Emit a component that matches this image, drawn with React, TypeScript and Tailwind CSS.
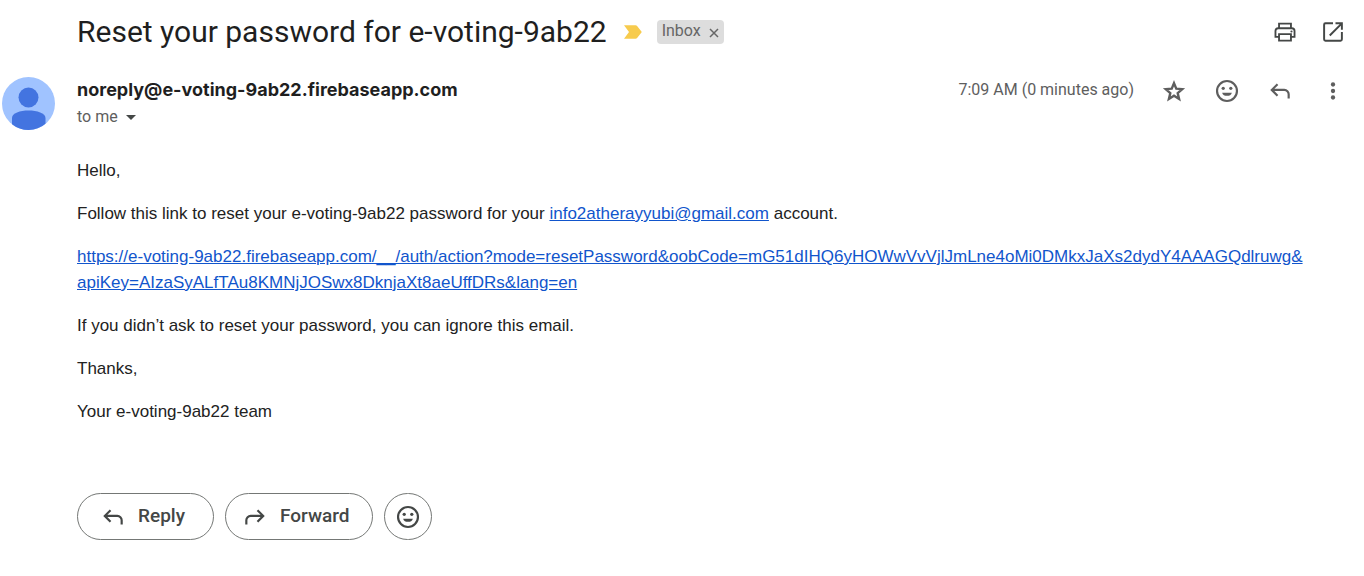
import type { ReactNode } from "react";

const REPLY =
  "M760-200v-160q0-50-35-85t-85-35H273l144 144-57 56-240-240 240-240 57 56-144 144h367q83 0 141.5 58.5T840-360v160h-80Z";
const FORWARD =
  "M200-200v-160q0-50 35-85t85-35h367l-144 144 57 56 240-240-240-240-57 56 144 144H320q-83 0-141.5 58.5T120-360v160h80Z";

function Symbol({ d }: { d: string }) {
  return (
    <svg viewBox="0 -960 960 960" className="size-[26px]" fill="currentColor" aria-hidden="true">
      <path d={d} />
    </svg>
  );
}

function Glyph({ children }: { children: ReactNode }) {
  return (
    <svg viewBox="0 0 24 24" className="size-[26px]" fill="currentColor" aria-hidden="true">
      {children}
    </svg>
  );
}

function Smile() {
  return (
    <Glyph>
      <circle cx="12" cy="12" r="9.2" fill="none" stroke="currentColor" strokeWidth="2" />
      <circle cx="8.5" cy="9.5" r="1.5" />
      <circle cx="15.5" cy="9.5" r="1.5" />
      <path d="M7.500 13.500h9a4.700 4.200 0 0 1-9 0z" />
    </Glyph>
  );
}

function IconButton({ label, children }: { label: string; children: ReactNode }) {
  return (
    <button type="button" aria-label={label} className="flex size-[26px] items-center justify-center">
      {children}
    </button>
  );
}

export default function App() {
  return (
    <main className="min-h-screen bg-white font-['Roboto',sans-serif] text-[#1f1f1f]">
      <header className="flex items-center pt-3 pr-[18px] pl-[77px]">
        <h1 className="text-[30px] leading-10">Reset your password for e-voting-9ab22</h1>
        <svg viewBox="0 0 18 14" className="ml-[17px] h-[14px] w-[18px]" fill="#f7cb4d" aria-hidden="true">
          <path d="M0 .3h11.500q1 0 1.600.8L17.800 7l-4.700 5.900q-.6.8-1.600.8H0L5 7z" />
        </svg>
        <div className="ml-[15px] flex h-6 items-center rounded bg-[#ddd] px-[5px] text-[#666]">
          <span className="pb-0.5 text-base">Inbox</span>
          <button type="button" aria-label="Remove label Inbox" className="ml-2 pt-0.5">
            <svg viewBox="0 0 10 10" className="size-[10px]" stroke="currentColor" strokeWidth="1.500" aria-hidden="true">
              <path d="M1 1l8 8M9 1L1 9" />
            </svg>
          </button>
        </div>
        <div className="ml-auto flex gap-[22px] text-[#444746]">
          <IconButton label="Print all">
            <Glyph>
              <g fill="none" stroke="currentColor" strokeWidth="1.700">
                <path d="M6.500 8.500V4.200h11v4.300" />
                <path d="M6.500 16.500H3.200v-5.500q0-2.500 2.500-2.500h12.600q2.500 0 2.500 2.500v5.500h-3.300" />
                <path d="M6.500 14h11v6h-11z" />
              </g>
              <circle cx="18" cy="11.500" r="1" />
            </Glyph>
          </IconButton>
          <IconButton label="Open in new window">
            <Glyph>
              <g fill="none" stroke="currentColor" strokeWidth="1.800">
                <path d="M12 4H5q-1.200 0-1.200 1.200v13.600Q3.800 20 5 20h14q1.200 0 1.200-1.200V12" />
                <path d="M14.300 4h5.900v6M20.200 4L9 15.200" />
              </g>
            </Glyph>
          </IconButton>
        </div>
      </header>

      <section className="mt-[25px] flex items-start pr-[18px] pl-0.5">
        <svg viewBox="0 0 53 53" className="size-[53px] shrink-0" role="img" aria-label="Sender">
          <circle cx="26.500" cy="26.500" r="26.500" fill="#a0c3ff" />
          <circle cx="26.500" cy="20.500" r="10" fill="#4374e0" />
          <path d="M10 47.200V41c0-5 8-7.500 16.500-7.500S43.500 36 43.500 41v5.800A26.500 26.500 0 0 1 10 47.200z" fill="#4374e0" />
        </svg>
        <div className="ml-[22px]">
          <h2 className="font-['Inter',sans-serif] text-lg leading-[26px] font-bold">
            noreply@e-voting-9ab22.firebaseapp.com
          </h2>
          <button type="button" className="flex items-center text-base leading-7 text-[#5e5e5e]">
            to me
            <svg viewBox="0 0 10 5" className="ml-2 h-[5px] w-[10px]" fill="#444746" aria-hidden="true">
              <path d="M0 0h10L5 5z" />
            </svg>
          </button>
        </div>
        <div className="ml-auto flex items-start text-[#5e5e5e]">
          <time className="mr-[27px] text-base leading-[26px]">7:09 AM (0 minutes ago)</time>
          <div className="flex gap-[27px] pt-px">
            <IconButton label="Star">
              <Glyph>
                <path
                  d="M12 4.800l2.100 5 5.500.5-4.200 3.600 1.300 5.400-4.700-2.900-4.700 2.900 1.300-5.400-4.200-3.600 5.500-.5z"
                  fill="none"
                  stroke="currentColor"
                  strokeWidth="2.200"
                />
              </Glyph>
            </IconButton>
            <IconButton label="Add reaction">
              <Smile />
            </IconButton>
            <IconButton label="Reply">
              <Symbol d={REPLY} />
            </IconButton>
            <IconButton label="More">
              <Glyph>
                <circle cx="12" cy="6" r="2" />
                <circle cx="12" cy="12" r="2" />
                <circle cx="12" cy="18" r="2" />
              </Glyph>
            </IconButton>
          </div>
        </div>
      </section>

      <article className="mt-[27px] flex flex-col gap-[17px] pr-10 pl-[77px] font-['Liberation_Sans',Arial,sans-serif] text-[17px] leading-[26px] text-[#222]">
        <p>Hello,</p>
        <p>
          Follow this link to reset your e-voting-9ab22 password for your{" "}
          <a href="mailto:info2atherayyubi@gmail.com" className="text-[#1155cc] underline">
            info2atherayyubi@gmail.com
          </a>{" "}
          account.
        </p>
        <p>
          <a href="#reset" className="text-[#1155cc] underline">
            https://e-voting-9ab22.firebaseapp.com/__/auth/action?mode=resetPassword&amp;oobCode=mG51dIHQ6yHOWwVvVjlJmLne4oMi0DMkxJaXs2dydY4AAAGQdlruwg&amp;
            <wbr />
            apiKey=AIzaSyALfTAu8KMNjJOSwx8DknjaXt8aeUffDRs&amp;lang=en
          </a>
        </p>
        <p>If you didn’t ask to reset your password, you can ignore this email.</p>
        <p>Thanks,</p>
        <p>Your e-voting-9ab22 team</p>
      </article>

      <footer className="mt-[68px] flex gap-[11px] pl-[77px] text-[19px] font-medium text-[#444746]">
        <button type="button" className="flex h-[47px] items-center gap-3 rounded-full border border-[#747775] pr-7 pl-[22px]">
          <Symbol d={REPLY} />
          Reply
        </button>
        <button type="button" className="flex h-[47px] items-center gap-3 rounded-full border border-[#747775] pr-[23px] pl-4">
          <Symbol d={FORWARD} />
          Forward
        </button>
        <button type="button" aria-label="Add reaction" className="flex h-[47px] w-12 items-center justify-center rounded-full border border-[#747775]">
          <Smile />
        </button>
      </footer>
    </main>
  );
}
